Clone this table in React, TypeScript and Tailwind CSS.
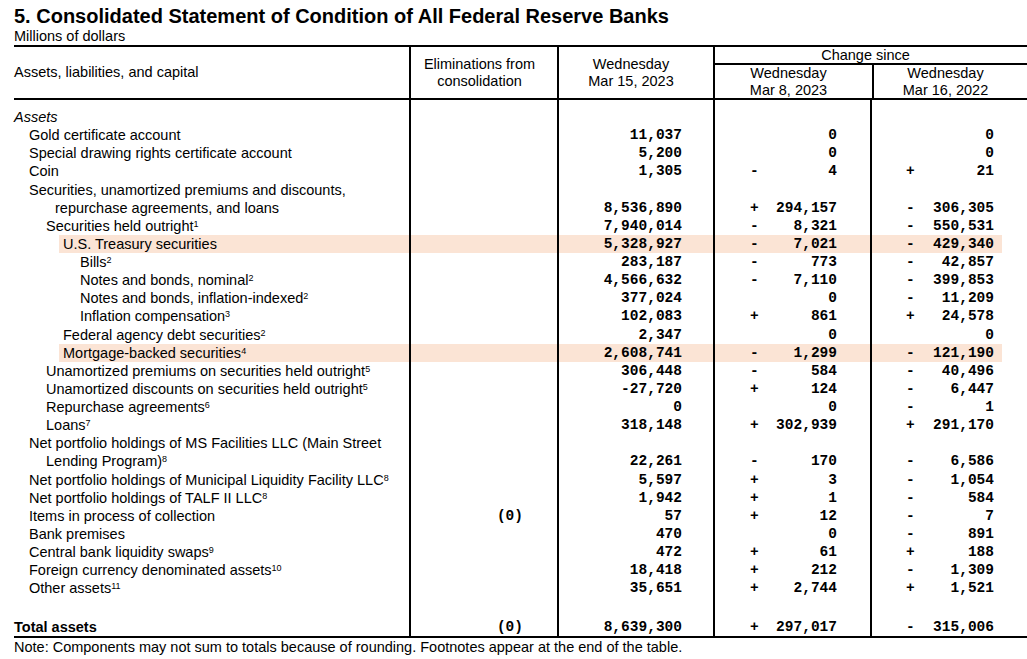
import React from "react";
import clsx from "clsx";

type Level = "l0" | "l1" | "l1c" | "l2" | "l3" | "l4";

type Row = {
  label?: React.ReactNode;
  level?: Level;
  elim?: string;
  value?: string;
  c1?: [string, string];
  c2?: [string, string];
  hl?: boolean;
  italic?: boolean;
  bold?: boolean;
  tall?: boolean;
};

const indent: Record<Level, string> = {
  l0: "pl-0",
  l1: "pl-[15px]",
  l1c: "pl-[41px]",
  l2: "pl-[32px]",
  l3: "pl-[49px]",
  l4: "pl-[66px]",
};

const S = ({ n }: { n: string }) => (
  <sup className="text-[9px] -top-[4px]">{n}</sup>
);

const rows: Row[] = [
  { label: "Assets", level: "l0", italic: true },
  { label: "Gold certificate account", level: "l1", value: "11,037", c1: ["", "0"], c2: ["", "0"] },
  { label: "Special drawing rights certificate account", level: "l1", value: "5,200", c1: ["", "0"], c2: ["", "0"] },
  { label: "Coin", level: "l1", value: "1,305", c1: ["-", "4"], c2: ["+", "21"] },
  { label: "Securities, unamortized premiums and discounts,", level: "l1" },
  { label: "repurchase agreements, and loans", level: "l1c", value: "8,536,890", c1: ["+", "294,157"], c2: ["-", "306,305"] },
  { label: <>Securities held outright<S n="1" /></>, level: "l2", value: "7,940,014", c1: ["-", "8,321"], c2: ["-", "550,531"] },
  { label: "U.S. Treasury securities", level: "l3", value: "5,328,927", c1: ["-", "7,021"], c2: ["-", "429,340"], hl: true },
  { label: <>Bills<S n="2" /></>, level: "l4", value: "283,187", c1: ["-", "773"], c2: ["-", "42,857"] },
  { label: <>Notes and bonds, nominal<S n="2" /></>, level: "l4", value: "4,566,632", c1: ["-", "7,110"], c2: ["-", "399,853"] },
  { label: <>Notes and bonds, inflation-indexed<S n="2" /></>, level: "l4", value: "377,024", c1: ["", "0"], c2: ["-", "11,209"] },
  { label: <>Inflation compensation<S n="3" /></>, level: "l4", value: "102,083", c1: ["+", "861"], c2: ["+", "24,578"] },
  { label: <>Federal agency debt securities<S n="2" /></>, level: "l3", value: "2,347", c1: ["", "0"], c2: ["", "0"] },
  { label: <>Mortgage-backed securities<S n="4" /></>, level: "l3", value: "2,608,741", c1: ["-", "1,299"], c2: ["-", "121,190"], hl: true },
  { label: <>Unamortized premiums on securities held outright<S n="5" /></>, level: "l2", value: "306,448", c1: ["-", "584"], c2: ["-", "40,496"] },
  { label: <>Unamortized discounts on securities held outright<S n="5" /></>, level: "l2", value: "-27,720", c1: ["+", "124"], c2: ["-", "6,447"] },
  { label: <>Repurchase agreements<S n="6" /></>, level: "l2", value: "0", c1: ["", "0"], c2: ["-", "1"] },
  { label: <>Loans<S n="7" /></>, level: "l2", value: "318,148", c1: ["+", "302,939"], c2: ["+", "291,170"] },
  { label: "Net portfolio holdings of MS Facilities LLC (Main Street", level: "l1" },
  { label: <>Lending Program)<S n="8" /></>, level: "l2", value: "22,261", c1: ["-", "170"], c2: ["-", "6,586"] },
  { label: <>Net portfolio holdings of Municipal Liquidity Facility LLC<S n="8" /></>, level: "l1", value: "5,597", c1: ["+", "3"], c2: ["-", "1,054"] },
  { label: <>Net portfolio holdings of TALF II LLC<S n="8" /></>, level: "l1", value: "1,942", c1: ["+", "1"], c2: ["-", "584"] },
  { label: "Items in process of collection", level: "l1", elim: "(0)", value: "57", c1: ["+", "12"], c2: ["-", "7"] },
  { label: "Bank premises", level: "l1", value: "470", c1: ["", "0"], c2: ["-", "891"] },
  { label: <>Central bank liquidity swaps<S n="9" /></>, level: "l1", value: "472", c1: ["+", "61"], c2: ["+", "188"] },
  { label: <>Foreign currency denominated assets<S n="10" /></>, level: "l1", value: "18,418", c1: ["+", "212"], c2: ["-", "1,309"] },
  { label: <>Other assets<S n="11" /></>, level: "l1", value: "35,651", c1: ["+", "2,744"], c2: ["+", "1,521"] },
  { tall: true },
  { label: "Total assets", level: "l0", bold: true, elim: "(0)", value: "8,639,300", c1: ["+", "297,017"], c2: ["-", "315,006"] },
];

const mono = "font-['Liberation_Mono',monospace] font-bold";

function Change({ v, pl }: { v?: [string, string]; pl: string }) {
  return (
    <div className={clsx("flex border-l-2 border-black pr-[33px]", pl, mono)}>
      <span className="w-[9px]">{v?.[0]}</span>
      <span className="flex-1 text-right">{v?.[1]}</span>
    </div>
  );
}

function Line({ row }: { row: Row }) {
  return (
    <div
      className={clsx(
        "grid grid-cols-[395px_148px_156px_157px_157px] leading-[18.14px]",
        row.tall ? "h-[20.5px]" : "h-[18.14px]",
        row.hl &&
          "bg-[linear-gradient(to_right,transparent_45px,#fbe4d5_45px,#fbe4d5_988px,transparent_988px)]"
      )}
    >
      <div
        className={clsx(
          "whitespace-nowrap",
          indent[row.level ?? "l0"],
          row.italic && "italic",
          row.bold && "font-bold"
        )}
      >
        {row.label}
      </div>
      <div className={clsx("border-l-2 border-black pr-[34px] text-right", mono)}>
        {row.elim}
      </div>
      <div className={clsx("border-l-2 border-black pr-[31px] text-right", mono)}>
        {row.value}
      </div>
      <Change v={row.c1} pl="pl-[35px]" />
      <Change v={row.c2} pl="pl-[34px]" />
    </div>
  );
}

export default function App() {
  return (
    <div className="w-[1027px] h-[659px] overflow-hidden bg-white pl-[14px] text-black text-[14.5px] font-['Liberation_Sans',Arial,sans-serif]">
      <h1 className="pt-[5px] text-[20px] font-bold leading-[22px]">
        5. Consolidated Statement of Condition of All Federal Reserve Banks
      </h1>
      <div className="mt-[1px] leading-[16px]">Millions of dollars</div>

      <div className="mt-[1px] border-y-2 border-black">
        {/* header */}
        <div className="grid h-[53px] grid-cols-[395px_148px_156px_314px] border-b-2 border-black leading-[16.7px]">
          <div className="flex items-center">Assets, liabilities, and capital</div>
          <div className="flex flex-col items-center justify-center border-l-2 border-black pr-[9px] text-center">
            <span>Eliminations from</span>
            <span>consolidation</span>
          </div>
          <div className="flex flex-col items-center justify-center border-l-2 border-black pr-[10px] text-center">
            <span>Wednesday</span>
            <span>Mar 15, 2023</span>
          </div>
          <div className="flex flex-col border-l-2 border-black">
            <div className="h-[18px] border-b-2 border-black pr-[11px] text-center leading-[16px]">
              Change since
            </div>
            <div className="grid flex-1 grid-cols-[157px_157px] leading-[16.5px]">
              <div className="flex flex-col items-center justify-center pr-[10px]">
                <span>Wednesday</span>
                <span>Mar 8, 2023</span>
              </div>
              <div className="flex flex-col items-center justify-center border-l-2 border-black pr-[12px]">
                <span>Wednesday</span>
                <span>Mar 16, 2022</span>
              </div>
            </div>
          </div>
        </div>

        {/* body */}
        <div className="grid h-[8px] grid-cols-[395px_148px_156px_157px_157px]">
          <div />
          <div className="border-l-2 border-black" />
          <div className="border-l-2 border-black" />
          <div className="border-l-2 border-black" />
          <div className="border-l-2 border-black" />
        </div>
        {rows.map((r, i) => (
          <Line key={i} row={r} />
        ))}
      </div>

      <div className="mt-[1px] leading-[16px]">
        Note: Components may not sum to totals because of rounding. Footnotes appear at the end of the table.
      </div>
    </div>
  );
}
